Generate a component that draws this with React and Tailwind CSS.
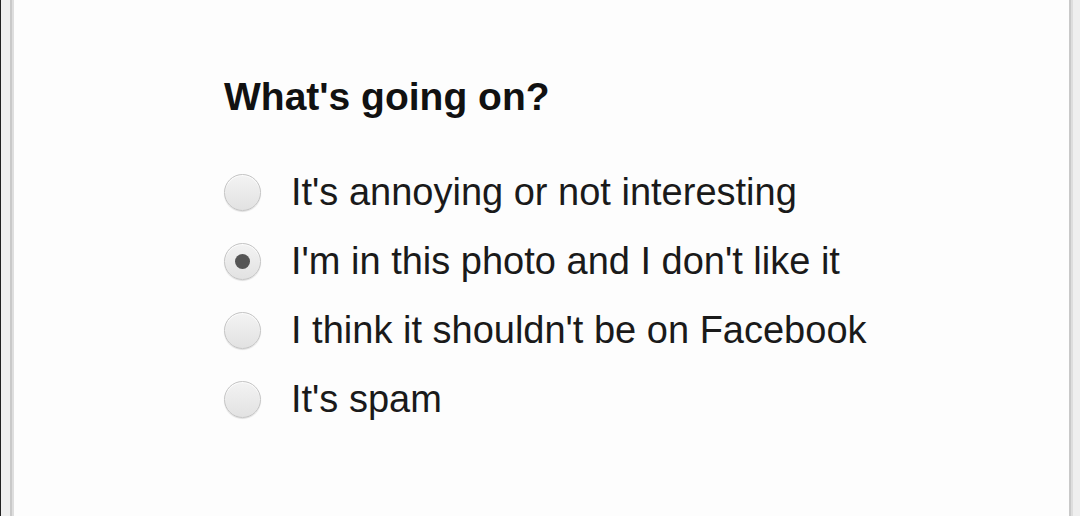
export default function App() {
  const options = [
    { label: "It's annoying or not interesting", checked: false },
    { label: "I'm in this photo and I don't like it", checked: true },
    { label: "I think it shouldn't be on Facebook", checked: false },
    { label: "It's spam", checked: false },
  ];
  return (
    <div
      className="flex w-[1080px] h-[516px] overflow-hidden bg-[#fdfdfd]"
      style={{ fontFamily: '"Liberation Sans", Arial, sans-serif' }}
    >
      <div className="w-px shrink-0 bg-[#222]" />
      <div className="w-[9px] shrink-0 bg-[#efefef]" />
      <div className="w-[2px] shrink-0 bg-[#c9c9c9]" />
      <div className="w-[2px] shrink-0 bg-[#dedede]" />
      <div className="flex-1 pl-[210px] pt-[75px]">
        <h1 className="text-[39px] leading-[44px] font-bold text-[#111]">
          What's going on?
        </h1>
        <div className="mt-[39px] flex flex-col">
          {options.map((o) => (
            <label key={o.label} className="flex items-center h-[69px]">
              <span className="relative w-[37px] h-[37px] rounded-full border border-[#c4c4c4] bg-gradient-to-b from-[#f3f3f3] to-[#e2e2e2] shadow-[inset_0_1px_1px_rgba(255,255,255,0.9),0_1px_1px_rgba(0,0,0,0.12)] flex items-center justify-center shrink-0">
                {o.checked && (
                  <span className="w-[15px] h-[15px] rounded-full bg-[#555]" />
                )}
              </span>
              <span className="ml-[30px] text-[38px] leading-[69px] text-[#1a1a1a]">
                {o.label}
              </span>
            </label>
          ))}
        </div>
      </div>
      <div className="w-[2px] shrink-0 bg-[#c9c9c9]" />
      <div className="w-[2px] shrink-0 bg-[#dedede]" />
      <div className="w-[7px] shrink-0 bg-[#efefef]" />
    </div>
  );
}
